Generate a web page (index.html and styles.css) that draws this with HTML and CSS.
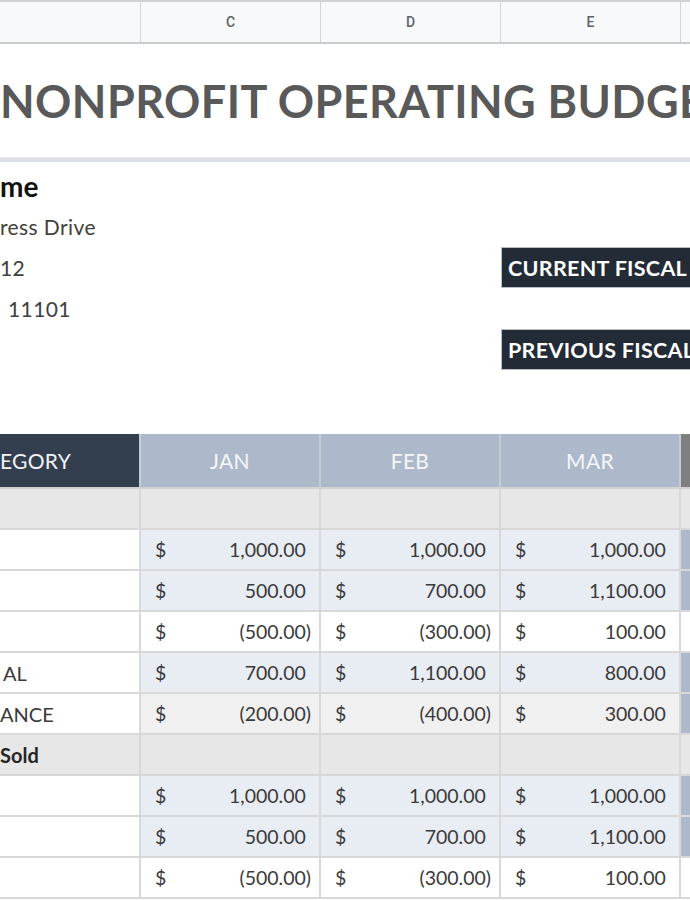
FILE: index.html
```html
<!DOCTYPE html>
<html lang="en">
<head>
<meta charset="utf-8">
<title>Nonprofit Operating Budget</title>
<link rel="stylesheet" href="styles.css">
</head>
<body>
<div class="sheet">
  <div class="colhead">
    <div class="ch"></div>
    <div class="ch">C</div>
    <div class="ch">D</div>
    <div class="ch">E</div>
    <div class="ch"></div>
  </div>

  <div class="titlebar">
    <h1 class="title">NONPROFIT OPERATING BUDGET</h1>
  </div>
  <div class="rule"></div>

  <div class="info">
    <div class="info-row"><span class="org">me</span></div>
    <div class="info-row"><span class="addr">ress Drive</span></div>
    <div class="info-row">
      <span class="addr">12</span>
      <div class="fiscal">CURRENT FISCAL YEAR</div>
    </div>
    <div class="info-row"><span class="addr addr-zip">11101</span></div>
    <div class="info-row">
      <span class="addr"></span>
      <div class="fiscal">PREVIOUS FISCAL YEAR</div>
    </div>
  </div>

  <div class="budget">
    <div class="row row-head">
      <div class="c cat-head">EGORY</div>
      <div class="c mon-head">JAN</div>
      <div class="c mon-head">FEB</div>
      <div class="c mon-head">MAR</div>
      <div class="c qtr-head"></div>
    </div>

    <div class="row row-section">
      <div class="c"></div><div class="c"></div><div class="c"></div><div class="c"></div><div class="c"></div>
    </div>

    <div class="row row-blue">
      <div class="c cat"></div>
      <div class="c num"><span class="cur">$</span><span class="val">1,000.00<i>)</i></span></div>
      <div class="c num"><span class="cur">$</span><span class="val">1,000.00<i>)</i></span></div>
      <div class="c num"><span class="cur">$</span><span class="val">1,000.00<i>)</i></span></div>
      <div class="c qtr"></div>
    </div>
    <div class="row row-blue">
      <div class="c cat"></div>
      <div class="c num"><span class="cur">$</span><span class="val">500.00<i>)</i></span></div>
      <div class="c num"><span class="cur">$</span><span class="val">700.00<i>)</i></span></div>
      <div class="c num"><span class="cur">$</span><span class="val">1,100.00<i>)</i></span></div>
      <div class="c qtr"></div>
    </div>
    <div class="row row-white">
      <div class="c cat"></div>
      <div class="c num"><span class="cur">$</span><span class="val">(500.00)</span></div>
      <div class="c num"><span class="cur">$</span><span class="val">(300.00)</span></div>
      <div class="c num"><span class="cur">$</span><span class="val">100.00<i>)</i></span></div>
      <div class="c qtr"></div>
    </div>
    <div class="row row-blue">
      <div class="c cat cat-al">AL</div>
      <div class="c num"><span class="cur">$</span><span class="val">700.00<i>)</i></span></div>
      <div class="c num"><span class="cur">$</span><span class="val">1,100.00<i>)</i></span></div>
      <div class="c num"><span class="cur">$</span><span class="val">800.00<i>)</i></span></div>
      <div class="c qtr"></div>
    </div>
    <div class="row row-gray">
      <div class="c cat">ANCE</div>
      <div class="c num"><span class="cur">$</span><span class="val">(200.00)</span></div>
      <div class="c num"><span class="cur">$</span><span class="val">(400.00)</span></div>
      <div class="c num"><span class="cur">$</span><span class="val">300.00<i>)</i></span></div>
      <div class="c qtr"></div>
    </div>

    <div class="row row-section">
      <div class="c cat-bold">Sold</div><div class="c"></div><div class="c"></div><div class="c"></div><div class="c"></div>
    </div>

    <div class="row row-blue">
      <div class="c cat"></div>
      <div class="c num"><span class="cur">$</span><span class="val">1,000.00<i>)</i></span></div>
      <div class="c num"><span class="cur">$</span><span class="val">1,000.00<i>)</i></span></div>
      <div class="c num"><span class="cur">$</span><span class="val">1,000.00<i>)</i></span></div>
      <div class="c qtr"></div>
    </div>
    <div class="row row-blue">
      <div class="c cat"></div>
      <div class="c num"><span class="cur">$</span><span class="val">500.00<i>)</i></span></div>
      <div class="c num"><span class="cur">$</span><span class="val">700.00<i>)</i></span></div>
      <div class="c num"><span class="cur">$</span><span class="val">1,100.00<i>)</i></span></div>
      <div class="c qtr"></div>
    </div>
    <div class="row row-white">
      <div class="c cat"></div>
      <div class="c num"><span class="cur">$</span><span class="val">(500.00)</span></div>
      <div class="c num"><span class="cur">$</span><span class="val">(300.00)</span></div>
      <div class="c num"><span class="cur">$</span><span class="val">100.00<i>)</i></span></div>
      <div class="c qtr"></div>
    </div>
  </div>
</div>
</body>
</html>
```
FILE: styles.css
```css
* { box-sizing: border-box; }

html, body {
  margin: 0;
  padding: 0;
  background: #ffffff;
}

body {
  font-family: "Lato", "Liberation Sans", sans-serif;
  color: #3d3d3d;
}

.sheet {
  width: 690px;
  height: 900px;
  overflow: hidden;
}

/* column letters */
.colhead {
  display: grid;
  grid-template-columns: 141px 180px 180px 180px 180px;
  height: 44px;
  background: #f8f9fa;
  border-top: 2px solid #cfd1d3;
  border-bottom: 2px solid #c9cbcd;
}

.ch {
  display: flex;
  align-items: center;
  justify-content: center;
  border-right: 1px solid #d3d5d7;
  font-family: "Roboto", "Liberation Sans", sans-serif;
  font-weight: 500;
  font-size: 14px;
  color: #5f6368;
}

/* title */
.titlebar {
  height: 113px;
  display: flex;
  align-items: center;
  overflow: hidden;
}

.title {
  margin: 0;
  white-space: nowrap;
  font-family: "Lato", "Liberation Sans", sans-serif;
  font-weight: 700;
  font-size: 45px;
  letter-spacing: 0.4px;
  color: #595959;
}

.rule {
  height: 5px;
  background: #dce1e8;
  border-top: 1px solid #e8ebf0;
}

/* organisation block */
.info {
  padding-top: 3px;
}

.info-row {
  display: grid;
  grid-template-columns: 501px 189px;
  height: 41px;
  align-items: center;
}

.org {
  font-weight: 700;
  font-size: 28px;
  color: #111111;
}

.addr {
  font-size: 21px;
  color: #404040;
  letter-spacing: 0.4px;
}

.addr-zip { padding-left: 8px; }

.fiscal {
  height: 41px;
  display: flex;
  align-items: center;
  padding-left: 6px;
  background: #232b37;
  border: 1px solid #b9bcc1;
  border-right: none;
  color: #ffffff;
  font-weight: 700;
  font-size: 21.5px;
  letter-spacing: 0.3px;
  white-space: nowrap;
  overflow: hidden;
}

/* budget table */
.budget {
  margin-top: 64px;
}

.row {
  display: grid;
  grid-template-columns: 141px 180px 180px 180px 180px;
  height: 41px;
}

.c {
  border-right: 2px solid #d8d8d8;
  border-bottom: 2px solid #d8d8d8;
  display: flex;
  align-items: center;
  white-space: nowrap;
  overflow: hidden;
  font-size: 20px;
}

.row-head {
  height: 55px;
}

.row-head .c {
  border-bottom: 2px solid #d2d2d2;
}

.cat-head {
  background: #333f4f;
  color: #f1f3f6;
  font-size: 21px;
  letter-spacing: 0.3px;
  border-right-color: #c7ccd4;
}

.mon-head {
  background: #adb9ca;
  color: #f5f7fa;
  justify-content: center;
  font-size: 21px;
  letter-spacing: 0.3px;
  border-right-color: #c6ccd5;
}

.qtr-head {
  background: #7f7f7f;
}

.row-section .c {
  background: #e7e7e7;
}

.cat-bold {
  font-weight: 700;
  color: #262626;
  font-size: 20px;
}

.cat {
  background: #ffffff;
  color: #3a3a3a;
}

.cat-al { padding-left: 3px; }

.num {
  justify-content: space-between;
  padding: 0 8px 0 14px;
  color: #3a3a3a;
  font-size: 19.5px;
}

.val i {
  font-style: normal;
  visibility: hidden;
}

.row-blue .num { background: #e8ecf3; }
.row-white .num { background: #ffffff; }
.row-gray .num { background: #f0f0f0; }

.qtr { background: #adb9ca; }
.row-white .qtr { background: #ffffff; }
```
